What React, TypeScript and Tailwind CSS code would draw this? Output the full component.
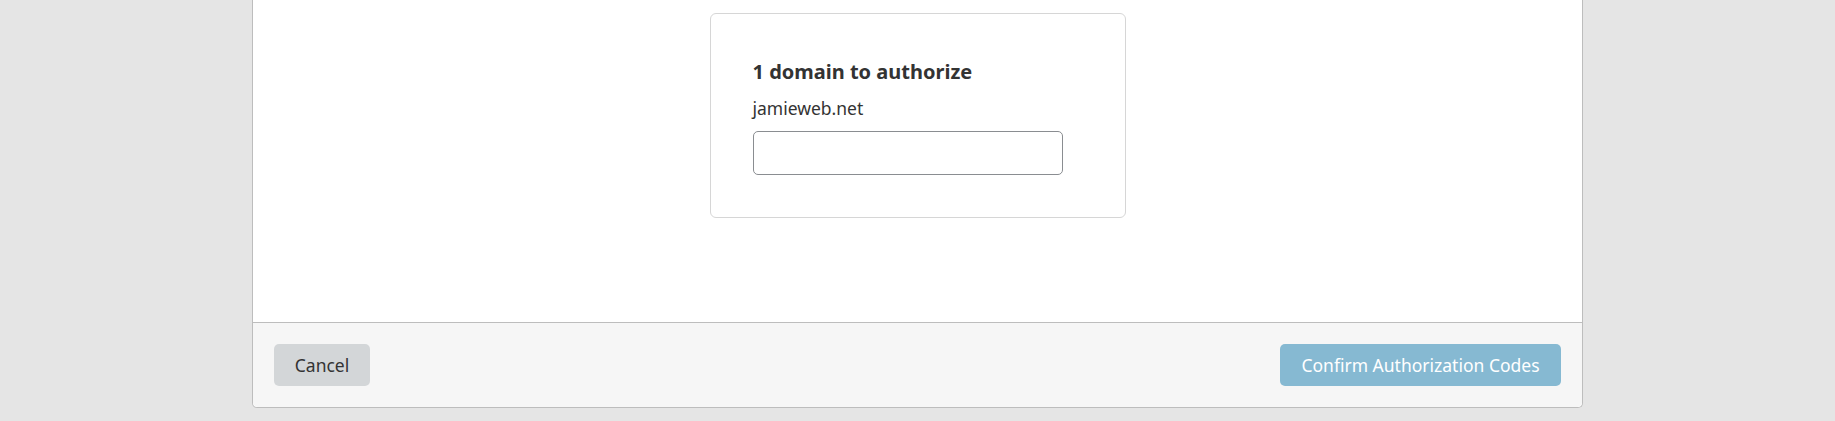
export default function App() {
  return (
    <div className="min-h-[421px] w-full bg-[#e5e5e5]" style={{ fontFamily: '"Noto Sans", "Open Sans", sans-serif' }}>
      <div className="ml-[252px] w-[1331px] bg-white border-x border-b border-[#bdbdbd] rounded-b-[5px] flex flex-col text-[#333]">
        <div className="h-[322px] flex justify-center items-start pt-[13px]">
          <div className="w-[416px] border border-[#d6d6d6] rounded-[6px] pt-[45px] pb-[42px] px-[42px]">
            <h2 className="text-[20px] leading-[26px] font-bold text-[#333]">1 domain to authorize</h2>
            <div className="mt-[11px] text-[17.5px] leading-[25px] text-[#333]">jamieweb.net</div>
            <input type="text" className="mt-[10px] block w-[310px] h-[44px] border border-[#8a8d91] rounded-[5px] bg-white outline-none" />
          </div>
        </div>
        <div className="h-[85px] border-t border-[#bdbdbd] bg-[#f6f6f6] rounded-b-[5px] flex items-center justify-between px-[21px]">
          <button className="h-[42px] w-[96px] rounded-[5px] bg-[#d3d6d8] text-[#333] text-[17.5px]">Cancel</button>
          <button className="h-[42px] w-[281px] rounded-[5px] bg-[#86b9d2] text-white text-[17.5px]">Confirm Authorization Codes</button>
        </div>
      </div>
    </div>
  );
}
